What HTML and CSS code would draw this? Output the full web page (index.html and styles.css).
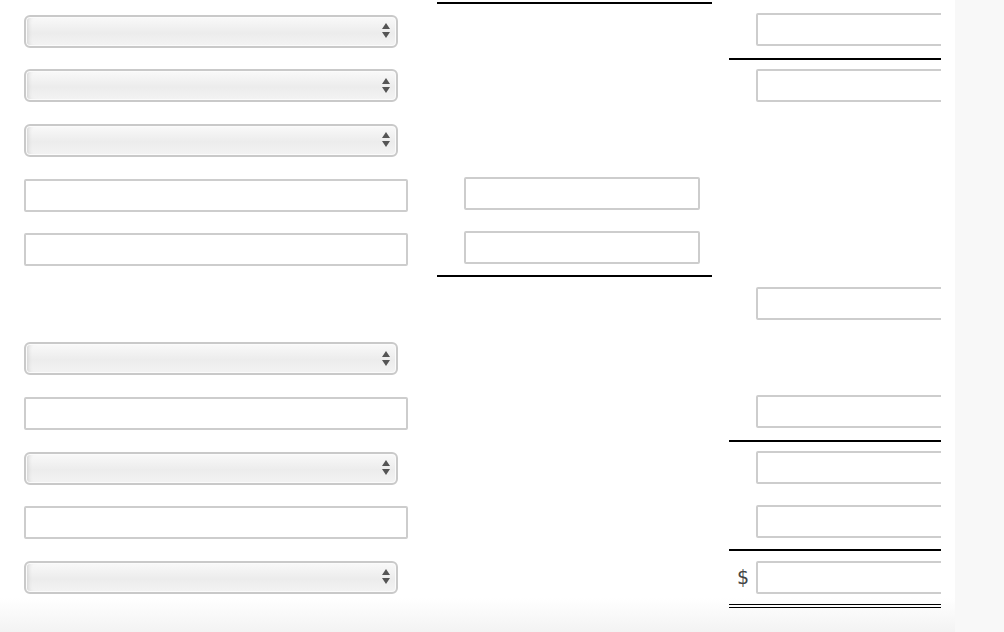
FILE: index.html
```html
<!DOCTYPE html>
<html>
<head>
<meta charset="utf-8">
<link rel="stylesheet" href="styles.css">
</head>
<body>
<div class="page">

	<div class="col col_left">
		<div class="row"><div class="pick"><svg class="arrows" width="10" height="18" viewBox="0 0 10 18"><path d="M5 1 L9 7 H1 Z M1 10 H9 L5 16 Z" fill="#555"/></svg></div></div>
		<div class="row"><div class="pick"><svg class="arrows" width="10" height="18" viewBox="0 0 10 18"><path d="M5 1 L9 7 H1 Z M1 10 H9 L5 16 Z" fill="#555"/></svg></div></div>
		<div class="row"><div class="pick"><svg class="arrows" width="10" height="18" viewBox="0 0 10 18"><path d="M5 1 L9 7 H1 Z M1 10 H9 L5 16 Z" fill="#555"/></svg></div></div>
		<div class="row"><input class="box box_wide" type="text"></div>
		<div class="row"><input class="box box_wide" type="text"></div>
		<div class="row"></div>
		<div class="row"><div class="pick"><svg class="arrows" width="10" height="18" viewBox="0 0 10 18"><path d="M5 1 L9 7 H1 Z M1 10 H9 L5 16 Z" fill="#555"/></svg></div></div>
		<div class="row"><input class="box box_wide" type="text"></div>
		<div class="row"><div class="pick"><svg class="arrows" width="10" height="18" viewBox="0 0 10 18"><path d="M5 1 L9 7 H1 Z M1 10 H9 L5 16 Z" fill="#555"/></svg></div></div>
		<div class="row"><input class="box box_wide" type="text"></div>
		<div class="row"><div class="pick"><svg class="arrows" width="10" height="18" viewBox="0 0 10 18"><path d="M5 1 L9 7 H1 Z M1 10 H9 L5 16 Z" fill="#555"/></svg></div></div>
	</div>

	<div class="col col_mid">
		<div class="row line_top"></div>
		<div class="row"></div>
		<div class="row"></div>
		<div class="row"><input class="box box_mid" type="text"></div>
		<div class="row row_tall line_bottom"><input class="box box_mid" type="text"></div>
	</div>

	<div class="col col_right">
		<div class="row line_bottom"><span class="unit"></span><input class="box box_right" type="text"></div>
		<div class="row"><span class="unit"></span><input class="box box_right" type="text"></div>
		<div class="row"></div>
		<div class="row"></div>
		<div class="row"></div>
		<div class="row"><span class="unit"></span><input class="box box_right" type="text"></div>
		<div class="row"></div>
		<div class="row line_bottom"><span class="unit"></span><input class="box box_right" type="text"></div>
		<div class="row"><span class="unit"></span><input class="box box_right" type="text"></div>
		<div class="row line_bottom"><span class="unit"></span><input class="box box_right" type="text"></div>
		<div class="row row_total line_double"><span class="unit">$</span><input class="box box_right" type="text"></div>
	</div>

</div>
</body>
</html>
```

FILE: styles.css
```css
* {margin: 0; padding: 0; box-sizing: border-box;}

body {
	background: #f8f8f8;
	font-family: "Liberation Sans", Arial, sans-serif;
	height: 632px;
	overflow: hidden;
}

.page {
	width: 955px;
	height: 632px;
	display: flex;
	background: linear-gradient(to bottom, #fff 0, #fff 598px, #f3f3f3 632px);
}

.col {display: flex; flex-direction: column;}
.col_left {margin-left: 24px; width: 384px; padding-top: 4px;}
.col_mid {margin-left: 29px; width: 275px; padding-top: 2px;}
.col_right {margin-left: 17px; width: 212px; padding-top: 5px; overflow: hidden;}

.row {
	height: 54.6px;
	flex: none;
	display: flex;
	align-items: center;
}
.col_mid .row {padding-left: 27px;}
.col_right .row {padding-bottom: 3px;}
.row_tall {height: 56.6px;}
.row_total {height: 57px; padding-bottom: 0 !important;}

.line_top {border-top: 2px solid #000;}
.line_bottom {border-bottom: 2px solid #000;}
.line_double {border-bottom: 4px double #000;}

.pick {
	width: 374px;
	height: 33px;
	border: 2px solid #c9c9c9;
	border-radius: 6px;
	background: linear-gradient(to bottom, #f9f9f9 0%, #ececec 55%, #f3f3f3 100%);
	box-shadow: inset 0 0 0 1px #fbfbfb, inset 5px 0 4px -3px #cfcfcf;
	display: flex;
	align-items: center;
	justify-content: flex-end;
	padding-right: 5px;
}
.arrows {display: block;}

.box {
	height: 33px;
	border: 2px solid #cdcdcd;
	border-radius: 2px;
	background: #fff;
	font: 14px "Liberation Sans", Arial, sans-serif;
	outline: none;
	flex: none;
}
.box_wide {width: 384px;}
.box_mid {width: 236px;}
.box_right {width: 220px;}

.unit {
	width: 27px;
	flex: none;
	padding-left: 8px;
	font: 19px "DejaVu Sans", sans-serif;
	color: #444;
}
```
